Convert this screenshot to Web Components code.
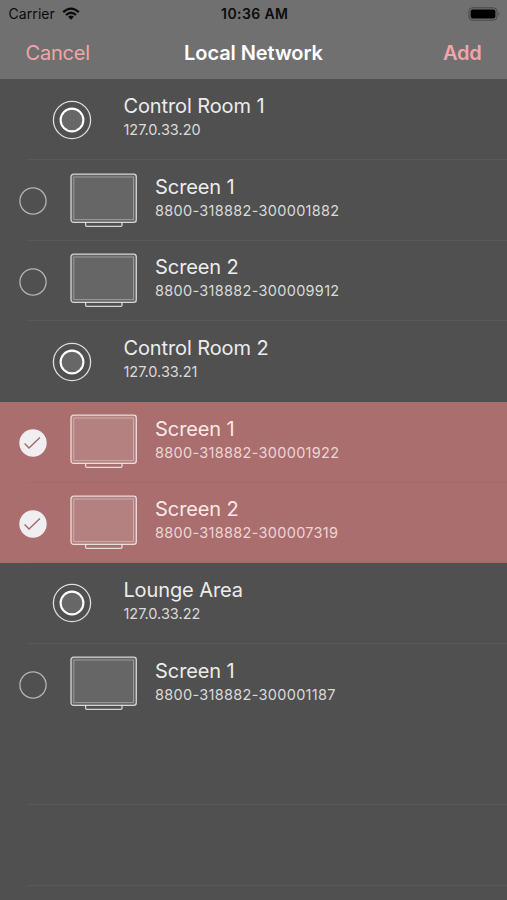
<!DOCTYPE html>
<html lang="en"><head><meta charset="utf-8"><title>Local Network</title>
<style>
html,body{margin:0;height:100%}
body{background:#505050;overflow:hidden;font-family:Inter,"Liberation Sans",sans-serif}
</style></head><body>
<local-network></local-network>
<script>
const define = (name, html) => customElements.define(name, class extends HTMLElement {
  constructor() {
    super();
    this.attachShadow({mode: 'open'}).innerHTML = html;
  }
});

define('status-bar', `<style>
:host{display:grid;grid-template-columns:1fr auto 1fr;align-items:center;height:27px;box-sizing:border-box;padding:0 6px 0 8.5px;color:#0c0c0c;font-size:14px}
.left{display:flex;align-items:center;gap:7px}
.carrier{letter-spacing:.08px}
.time{font-weight:600;font-size:14px;letter-spacing:.4px;white-space:nowrap}
.battery{justify-self:end}
svg{display:block}
</style>
<div class="left"><span class="carrier">Carrier</span>
<svg width="18" height="13" viewBox="0 0 18 13" fill="none" stroke="#0c0c0c" stroke-width="2.3"><path d="M1.2 5.2Q9 -2 16.8 5.2M4 8Q9 3.5 14 8"/><path d="M6.1 9.8Q9 7.4 11.9 9.8L9 12.7Z" fill="#0c0c0c" stroke="none"/></svg></div>
<span class="time">10:36 AM</span>
<svg class="battery" width="33" height="14" viewBox="0 0 33 14"><rect x="1" y=".8" width="28" height="12.4" rx="3.5" fill="none" stroke="#484848" stroke-width="1"/><rect x="2.6" y="2.4" width="24.8" height="9.2" rx="2" fill="#000"/><path d="M30.4 5Q32.3 7 30.4 9Z" fill="#484848"/></svg>`);

define('nav-bar', `<style>
:host{display:grid;grid-template-columns:1fr auto 1fr;align-items:center;height:51px;box-sizing:border-box;padding:0 25.5px;color:#fff;font-size:20px}
.title{font-weight:600;letter-spacing:-.08px}
::slotted(*){color:#f2a5aa;letter-spacing:-.2px}
::slotted([slot=right]){justify-self:end;font-weight:600}
</style><slot name="left"></slot><span class="title"><slot></slot></span><slot name="right"></slot>`);

define('room-icon', `<style>:host{display:block}svg{display:block}</style>
<svg width="40" height="40" viewBox="0 0 40 40"><circle cx="20" cy="20" r="18.6" fill="none" stroke="#dedede" stroke-width="1.3"/><circle cx="20" cy="20" r="11.4" fill="#676767" stroke="#fff" stroke-width="2.1"/></svg>`);

define('screen-icon', `<style>:host{display:block}svg{display:block}</style>
<svg width="68" height="55" viewBox="0 0 68 55" fill="none" stroke="#fff" stroke-opacity=".75"><rect x="1" y="1.2" width="65.3" height="48.2" rx="2.6" fill="#fff" fill-opacity=".13" stroke-width="1.3"/><rect x="3.8" y="4" width="59.7" height="42.6" stroke-opacity=".35" stroke-width="1"/><path d="M15.6 49.4V52.2Q15.6 53.3 16.8 53.3H50.8Q52 53.3 52 52.2V49.4" stroke-width="1.3"/></svg>`);

define('check-mark', `<style>
:host{display:block}svg{display:block}
.on{display:none}
:host([checked]) .on{display:inline}
:host([checked]) .off{display:none}
</style>
<svg width="28" height="28" viewBox="0 0 28 28" fill="none"><circle class="off" cx="14" cy="14" r="13.1" stroke="#b4b4b4" stroke-width="1.3"/><g class="on"><circle cx="14" cy="14" r="13.7" fill="#f0eef1"/><path d="M5.6 14.4L10 18.9L20.9 8.4" stroke="#a0686d" stroke-width="1.4"/></g></svg>`);

const rowText = `
:host{display:flex;height:80.64px;box-sizing:border-box;background:linear-gradient(#585858,#585858) 27px 100%/100% 1px no-repeat;color:#ececec}
:host([last]){background:none}
.text{display:flex;flex-direction:column;white-space:nowrap;padding-top:13.8px}
.name{font-size:20px;line-height:26px;letter-spacing:-.1px}
.id{font-size:14.5px;line-height:22px;color:#dadada}
`;

define('room-row', `<style>${rowText}
:host([before-selected]){background:none}
room-icon{margin:20.2px 31.8px 0 51.6px}
</style><room-icon></room-icon><div class="text"><span class="name"><slot></slot></span><span class="id"><slot name="id"></slot></span></div>`);

customElements.define('screen-row', class extends HTMLElement {
  constructor() {
    super();
    const on = this.hasAttribute('selected');
    this.attachShadow({mode: 'open'}).innerHTML = `<style>${rowText}
:host([selected]){background:linear-gradient(#a26a6a,#a26a6a) 27px 100%/100% 1px no-repeat,#aa6e6e;color:#f8e9e8}
.id{letter-spacing:.3px}
:host([selected]) .id{color:#eed5d4}
check-mark{margin:27.4px 23.1px 0 18.7px}
screen-icon{margin:12.5px 17.3px 0 0}
</style><check-mark ${on ? 'checked' : ''}></check-mark><screen-icon></screen-icon><div class="text"><span class="name"><slot></slot></span><span class="id"><slot name="id"></slot></span></div>`;
  }
});

define('empty-row', `<style>${rowText}</style>`);

define('local-network', `<style>
:host{display:block;height:900px;overflow:hidden;background:#505050}
header{background:#707070;height:79.45px}
</style>
<header><status-bar></status-bar><nav-bar><span slot="left">Cancel</span>Local Network<span slot="right">Add</span></nav-bar></header>
<main>
<room-row>Control Room 1<span slot="id">127.0.33.20</span></room-row>
<screen-row>Screen 1<span slot="id">8800-318882-300001882</span></screen-row>
<screen-row>Screen 2<span slot="id">8800-318882-300009912</span></screen-row>
<room-row before-selected>Control Room 2<span slot="id">127.0.33.21</span></room-row>
<screen-row selected>Screen 1<span slot="id">8800-318882-300001922</span></screen-row>
<screen-row selected>Screen 2<span slot="id">8800-318882-300007319</span></screen-row>
<room-row>Lounge Area<span slot="id">127.0.33.22</span></room-row>
<screen-row last>Screen 1<span slot="id">8800-318882-300001187</span></screen-row>
<empty-row></empty-row>
<empty-row></empty-row>
</main>`);
</script>
</body></html>
